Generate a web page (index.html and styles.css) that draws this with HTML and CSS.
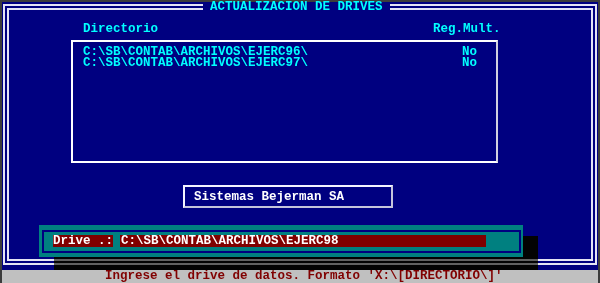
FILE: index.html
```html
<!DOCTYPE html>
<html lang="es">
<head>
    <meta charset="UTF-8">
    <meta name="viewport" content="width=device-width, initial-scale=1.0">
    <title>Actualizacion de Drives</title>
    <link rel="stylesheet" href="styles.css">
</head>
<body>
    <div class="screen">
        <div class="frame">
            <div class="frame-inner">
                <div class="heads">
                    <span>Directorio</span>
                    <span>Reg.Mult.</span>
                </div>
                <div class="list">
                    <div class="row"><span>C:\SB\CONTAB\ARCHIVOS\EJERC96\</span><span>No</span></div>
                    <div class="row"><span>C:\SB\CONTAB\ARCHIVOS\EJERC97\</span><span>No</span></div>
                </div>
                <div class="brand">Sistemas Bejerman SA</div>
            </div>
        </div>
        <div class="status">Ingrese el drive de datos. Formato 'X:\[DIRECTORIO\]'</div>

        <!-- titulo sobre el marco doble -->
        <div class="title">ACTUALIZACION DE DRIVES</div>

        <!-- ventana de entrada con sombra -->
        <div class="popup">
            <div class="shadow"></div>
            <div class="drive">
                <div class="drive-box">
                    <span class="label">Drive .:</span>
                    <span class="field">C:\SB\CONTAB\ARCHIVOS\EJERC98</span>
                </div>
            </div>
        </div>
    </div>
</body>
</html>
```

FILE: styles.css
```css
body {
    margin: 0;
    background-color: #3c3c3c;
    font-family: 'Liberation Mono', 'DejaVu Sans Mono', monospace;
    font-size: 12.5px;
    font-weight: bold;
}

.screen {
    position: relative;
    width: 600px;
    height: 283px;
    box-sizing: border-box;
    border: 2px solid #3c3c3c;
    border-bottom: 0;
    background-color: #000080;
    display: flex;
    flex-direction: column;
}

/* marco doble */
.frame {
    margin: 2px 1px 0 1px;
    height: 261px;
    box-sizing: border-box;
    border: 2px solid #e4e4f4;
    padding: 2px;
    display: flex;
}

.frame-inner {
    flex: 1;
    border: 2px solid #e4e4f4;
    padding-top: 14px;
    display: flex;
    flex-direction: column;
    align-items: flex-start;
}

.title {
    position: absolute;
    left: 201px;
    top: 0;
    padding: 0 7px;
    line-height: 11px;
    background-color: #000080;
    color: #00ffff;
}

.heads {
    display: grid;
    grid-template-columns: 350px auto;
    padding-left: 74px;
    line-height: 11px;
    color: #00ffff;
}

/* lista de directorios */
.list {
    margin: 5px 0 0 62px;
    width: 427px;
    height: 123px;
    box-sizing: border-box;
    border: 2px solid #ffffff;
    border-right-color: #d0d0e0;
    padding: 5px 0 0 10px;
}

.row {
    display: grid;
    grid-template-columns: 379px auto;
    line-height: 11.3px;
    color: #00ffff;
}

.brand {
    margin: 22px 0 0 174px;
    width: 210px;
    height: 23px;
    box-sizing: border-box;
    border: 2px solid #f4f4ff;
    border-right-color: #c4c4dc;
    border-bottom-color: #c4c4dc;
    padding: 5px 0 0 9px;
    line-height: 11px;
    color: #ffffff;
}

.status {
    margin-top: 5px;
    flex: 1;
    background-color: #c0c0c0;
    color: #800000;
    line-height: 13px;
    padding-left: 103px;
}

/* ventana de drive */
.popup {
    position: absolute;
    left: 37px;
    top: 223px;
}

.shadow {
    position: absolute;
    left: 15px;
    top: 11px;
    width: 484px;
    height: 34px;
    background-color: rgba(0, 0, 0, 0.05);
    backdrop-filter: grayscale(1) brightness(0.45);
}

.drive {
    position: relative;
    width: 484px;
    height: 32px;
    box-sizing: border-box;
    background-color: #008080;
    padding: 5px 2px 4px 3px;
}

.drive-box {
    height: 100%;
    box-sizing: border-box;
    border: 2px solid #000080;
    padding: 3px 0 0 9px;
    display: flex;
    gap: 7px;
}

.label,
.field {
    height: 12px;
    line-height: 12px;
    background-color: #800000;
    color: #ffffff;
}

.field {
    width: 366px;
    box-sizing: border-box;
    padding-left: 1px;
}
```
